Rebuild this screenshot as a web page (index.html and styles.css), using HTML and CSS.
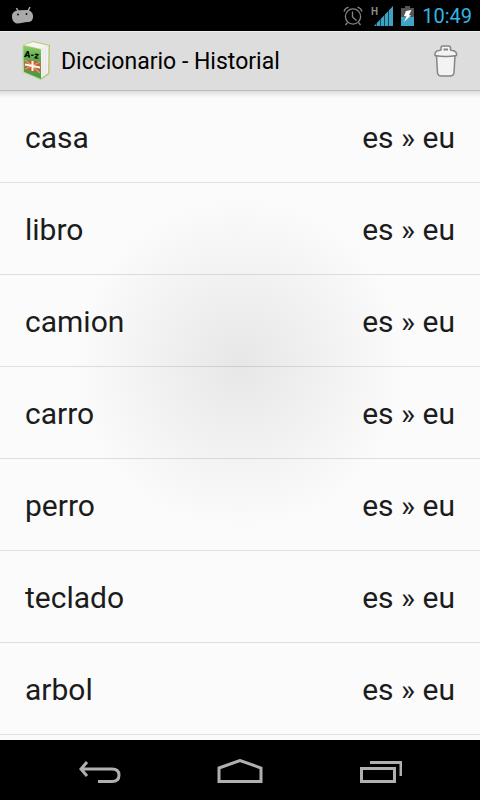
FILE: index.html
```html
<!DOCTYPE html>
<html lang="es">
<head>
<meta charset="utf-8">
<meta name="viewport" content="width=device-width, initial-scale=1">
<title>Diccionario - Historial</title>
<link rel="stylesheet" href="styles.css">
</head>
<body>
<div class="status">
  <svg class="status-droid" width="22" height="18" viewBox="0 0 22 18" aria-hidden="true">
    <path d="M4.500 1l2 4M18 0l-2 4" stroke="#a9a9a9" stroke-width="1.500" fill="none"/>
    <path d="M0 9.500C0 5.500 3 3.500 7 3.300L16 3C19.500 4 21.500 7 21 10.500C20.500 13.500 19 15 16 15C12 15.300 9 16.500 5 16.500C1.500 16 0 12.500 0 9.500Z" fill="#a9a9a9"/>
    <circle cx="6" cy="7.500" r=".9"/>
    <circle cx="14.500" cy="7" r=".9"/>
  </svg>
  <div class="status-icons">
    <svg width="20" height="20" viewBox="0 0 20 20" fill="none" stroke="#858585" stroke-width="1.300" aria-hidden="true">
      <circle cx="10" cy="10.500" r="7.600"/>
      <path d="M9.500 5.500v5.500l4 3.500M1 5.500Q2 2 5.500 1.200M14.500 1.200Q18 2 19 5.500M4.500 16.500l-2 2.500M15.500 16.500l2 2.500"/>
    </svg>
    <svg width="22" height="22" viewBox="0 0 22 22" aria-hidden="true">
      <text class="network" x="0" y="10">H</text>
      <path d="M22 1V21H3Z" fill="#3fa3c6"/>
      <path d="M5.500 10V22M9.500 8V22M13.500 4V22M17.500 0V22" stroke="#000" stroke-width=".6"/>
    </svg>
    <svg width="13" height="20" viewBox="0 0 13 20" aria-hidden="true">
      <path d="M4 0H9V2H13V12H0V2H4Z" fill="#555"/>
      <path d="M0 11H13V20H0Z" fill="#3fa3c6"/>
      <path d="M5 5L10.500 4L8 9L10 9.500L3 16L5.500 10.500L3 10Z" fill="#fff"/>
    </svg>
    <time class="clock">10:49</time>
  </div>
</div>
<header class="bar">
  <svg class="book" width="30" height="42" viewBox="0 0 30 42" aria-hidden="true">
    <defs>
      <linearGradient id="cover" x1="0" y1="0" x2="0" y2="1">
        <stop offset="0" stop-color="#8fc968"/>
        <stop offset=".35" stop-color="#5fb04f"/>
        <stop offset=".6" stop-color="#7d8a48"/>
        <stop offset="1" stop-color="#38a244"/>
      </linearGradient>
    </defs>
    <path d="M2 5L12 1L29 5L28.500 34L20 40L3 32Z" fill="#b9cc7c"/>
    <path d="M3 5L12 2L28 6L20 9Z" fill="#f5f6f0"/>
    <path d="M20 9L27.500 6L27 33L20 38Z" fill="#f3f3f3"/>
    <path d="M22 8.500V35.500M24.600 7.500V34" stroke="#dcdcdc" stroke-width=".7"/>
    <path d="M2 6L20 9.500V39L3 32Z" fill="url(#cover)"/>
    <path d="M4 20L19 22V33L4 29Z" fill="#d35839"/>
    <path d="M4 20L19 33M19 22L4 29" stroke="#a5b575" stroke-width="1.300"/>
    <path d="M11.500 21V31M4 24.500L19 27.500" stroke="#fff5e5" stroke-width="2"/>
    <path d="M2 6V32L20 39.500" fill="none" stroke="#a9dd91"/>
    <text class="book-text" x="3" y="17" transform="rotate(7 3 17)">A-z</text>
  </svg>
  <h1 class="title">Diccionario - Historial</h1>
  <button class="delete" type="button" aria-label="Borrar historial">
    <svg width="24" height="32" viewBox="0 0 24 32" fill="#f3f3f3" stroke="#858585" stroke-width="1.500" stroke-linejoin="round" aria-hidden="true">
      <path d="M2.500 10.500L3.500 28Q4 31 7.500 31H16Q19.500 31 20 28L21 10.500Z"/>
      <path d="M1 10.500Q.5 6 5 5.500L7 5V3Q7 1 9 1H14.500Q16.500 1 16.500 3V5L18.500 5.500Q23 6 22.500 10.500Q12 12.500 1 10.500Z"/>
      <path d="M9.500 4.500H14" stroke-width="2"/>
    </svg>
  </button>
</header>
<main class="content">
  <ul class="history">
    <li><span>casa</span><span>es » eu</span></li>
    <li><span>libro</span><span>es » eu</span></li>
    <li><span>camion</span><span>es » eu</span></li>
    <li><span>carro</span><span>es » eu</span></li>
    <li><span>perro</span><span>es » eu</span></li>
    <li><span>teclado</span><span>es » eu</span></li>
    <li><span>arbol</span><span>es » eu</span></li>
  </ul>
</main>
<nav class="nav">
  <button type="button" aria-label="Atrás">
    <svg width="44" height="26" viewBox="0 0 44 26" aria-hidden="true">
      <path d="M9 3L3 10L9 17M3 10H34Q41 10 41 16Q41 22.500 34 22.500H20"/>
    </svg>
  </button>
  <button type="button" aria-label="Inicio">
    <svg width="46" height="26" viewBox="0 0 46 26" aria-hidden="true">
      <path d="M2 9L23 1.500L44 9V22.500H2Z"/>
    </svg>
  </button>
  <button type="button" aria-label="Aplicaciones recientes">
    <svg width="44" height="26" viewBox="0 0 44 26" aria-hidden="true">
      <path d="M3.500 9.500H36.500V22.500H3.500ZM12 3.500H43V17"/>
    </svg>
  </button>
</nav>
</body>
</html>
```
FILE: styles.css
```css
* {
  box-sizing: border-box;
}

body {
  margin: 0;
  min-height: 100vh;
  display: flex;
  flex-direction: column;
  background: #000;
  color: #1c1c1c;
  font-family: Roboto, "Noto Sans", sans-serif;
}

svg {
  display: block;
}

button {
  border: 0;
  padding: 0;
  background: none;
}

.status {
  height: 31px;
  padding: 0 8px 0 12px;
  display: flex;
  align-items: center;
  justify-content: space-between;
}

.status-icons {
  display: flex;
  align-items: center;
  gap: 8px;
}

.network {
  font-size: 10px;
  font-weight: 700;
  fill: #8c8c8c;
}

.clock {
  color: #33b5e5;
  font-size: 20px;
}

.bar {
  height: 60px;
  padding: 0 22px 0 21px;
  display: flex;
  align-items: center;
  gap: 10px;
  background: #ddd;
  border-top: 1px solid #eee;
  border-bottom: 1px solid #b9b9b9;
}

.title {
  flex: 1;
  margin: 0;
  color: #000;
  font-size: 23px;
  font-weight: 400;
}

.content {
  flex: 1;
  background:
    linear-gradient(#dedede, #fbfbfb00 7px),
    radial-gradient(circle 165px at 50% 42%, #e7e7e7, #fbfbfb);
}

.history {
  margin: 0;
  padding: 0;
  list-style: none;
}

.history li {
  height: 92px;
  padding: 1px 25px 0;
  display: flex;
  align-items: center;
  justify-content: space-between;
  border-bottom: 1px solid #0000001c;
  font-size: 30px;
}

.nav {
  height: 60px;
  padding: 4px 30px 0;
  display: flex;
}

.nav button {
  flex: 1;
  display: flex;
  align-items: center;
  justify-content: center;
}

.nav svg {
  fill: none;
  stroke: #b0b0b0;
  stroke-width: 3;
}

.book-text {
  font-size: 9px;
  font-weight: 900;
}
```
